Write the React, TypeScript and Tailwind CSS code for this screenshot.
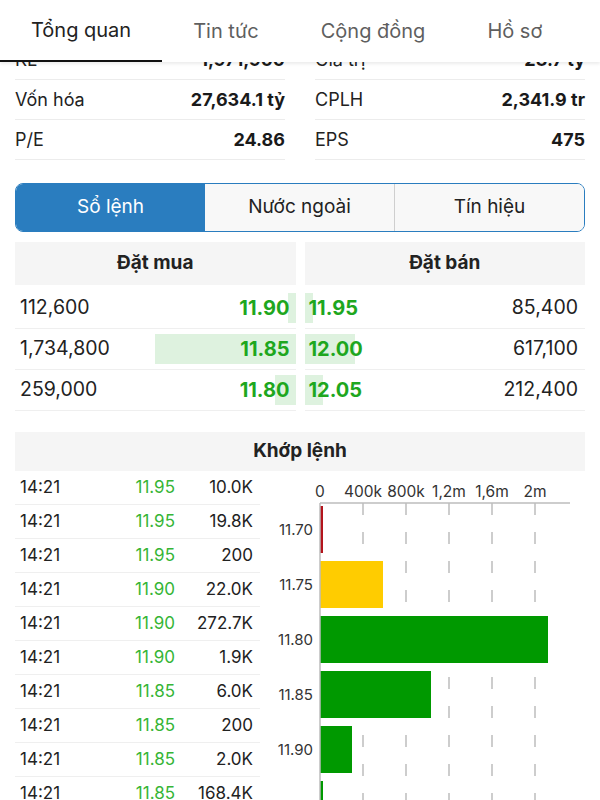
import React from "react";

const tabs = ["Tổng quan", "Tin tức", "Cộng đồng", "Hồ sơ"];

const stats = [
  [
    ["KL", "1,971,900"],
    ["Vốn hóa", "27,634.1 tỷ"],
    ["P/E", "24.86"],
  ],
  [
    ["Giá trị", "23.7 tỷ"],
    ["CPLH", "2,341.9 tr"],
    ["EPS", "475"],
  ],
];

const bids = [
  { qty: "112,600", price: "11.90", bar: 8 },
  { qty: "1,734,800", price: "11.85", bar: 141 },
  { qty: "259,000", price: "11.80", bar: 21 },
];

const asks = [
  { qty: "85,400", price: "11.95", bar: 8 },
  { qty: "617,100", price: "12.00", bar: 50 },
  { qty: "212,400", price: "12.05", bar: 18 },
];

const trades = [
  ["14:21", "11.95", "10.0K"],
  ["14:21", "11.95", "19.8K"],
  ["14:21", "11.95", "200"],
  ["14:21", "11.90", "22.0K"],
  ["14:21", "11.90", "272.7K"],
  ["14:21", "11.90", "1.9K"],
  ["14:21", "11.85", "6.0K"],
  ["14:21", "11.85", "200"],
  ["14:21", "11.85", "2.0K"],
  ["14:21", "11.85", "168.4K"],
];

const bars = [
  { label: "11.70", w: 3, color: "#b3141c" },
  { label: "11.75", w: 63, color: "#ffcc00" },
  { label: "11.80", w: 228, color: "#009900" },
  { label: "11.85", w: 111, color: "#009900" },
  { label: "11.90", w: 32, color: "#009900" },
  { label: "11.95", w: 3, color: "#009900" },
];

const ticks = ["0", "400k", "800k", "1,2m", "1,6m", "2m"];

function VolumeChart() {
  return (
    <svg width="325" height="330" viewBox="0 0 325 330" className="block">
      {ticks.map((t, i) => (
        <text
          key={t}
          x={60 + i * 43}
          y={26}
          textAnchor="middle"
          fontSize="15.5"
          fill="#333"
          fontFamily="Inter, sans-serif"
        >
          {t}
        </text>
      ))}
      <line x1="60" y1="32" x2="310" y2="32" stroke="#bdbdbd" strokeWidth="1.5" />
      {[1, 2, 3, 4, 5].map((i) => (
        <line
          key={i}
          x1={60 + i * 43}
          y1="32"
          x2={60 + i * 43}
          y2="330"
          stroke="#bdbdbd"
          strokeWidth="1.5"
          strokeDasharray="12 17"
        />
      ))}
      {bars.map((b, i) => (
        <g key={b.label}>
          <rect x="60" y={35 + i * 55} width={b.w} height="47" fill={b.color} />
          {i < 5 && (
            <text
              x="53"
              y={35 + i * 55 + 29}
              textAnchor="end"
              fontSize="15"
              fill="#333"
              fontFamily="Inter, sans-serif"
            >
              {b.label}
            </text>
          )}
        </g>
      ))}
      <line x1="60" y1="32" x2="60" y2="330" stroke="#bdbdbd" strokeWidth="1.5" />
    </svg>
  );
}

export default function App() {
  return (
    <div className="w-[600px] h-[800px] overflow-hidden bg-white font-['Inter',sans-serif] text-[#222]">
      {/* tab header */}
      <div className="relative z-10 flex h-[62px] bg-white shadow-[0_2px_3px_rgba(0,0,0,0.08)]">
        {tabs.map((t, i) => (
          <div
            key={t}
            className={
              i === 0
                ? "flex items-center px-[31px] text-[20px] text-[#222] border-b-2 border-[#111]"
                : "flex items-center px-[31px] text-[20px] text-[#5f5f5f]"
            }
          >
            {t}
          </div>
        ))}
      </div>

      <div className="-mt-[22px]">
        {/* stats */}
        <div className="grid grid-cols-2 gap-[30px] px-[15px]">
          {stats.map((col, ci) => (
            <div key={ci}>
              {col.map(([k, v]) => (
                <div
                  key={k}
                  className="flex h-[40px] items-center justify-between border-b border-[#ececec] text-[18px]"
                >
                  <span>{k}</span>
                  <span className="font-bold text-[#1a1a1a]">{v}</span>
                </div>
              ))}
            </div>
          ))}
        </div>

        {/* segmented control */}
        <div className="mx-[15px] mt-[23px] flex h-[49px] overflow-hidden rounded-[8px] border border-[#2a7dbf]">
          <div className="flex flex-1 items-center justify-center bg-[#2a7dbf] text-[19px] text-white">
            Sổ lệnh
          </div>
          <div className="flex flex-1 items-center justify-center bg-[#f8f8f8] text-[19px] text-[#222]">
            Nước ngoài
          </div>
          <div className="flex flex-1 items-center justify-center border-l border-[#cfcfcf] bg-[#f8f8f8] text-[19px] text-[#222]">
            Tín hiệu
          </div>
        </div>

        {/* order book */}
        <div className="mt-[10px] grid grid-cols-2 gap-[9px] px-[15px]">
          <div>
            <div className="flex h-[43px] items-center justify-center bg-[#f5f5f5] text-[19px] font-bold">
              Đặt mua
            </div>
            <div className="pt-[3px]">
              {bids.map((r) => (
                <div key={r.qty} className="relative flex h-[41px] items-center justify-between border-b border-[#efefef] pl-[5px] pr-[6px] text-[19.5px]">
                  <div
                    className="absolute right-0 top-[5px] h-[30px] bg-[#def2df]"
                    style={{ width: r.bar }}
                  />
                  <span className="relative">{r.qty}</span>
                  <span className="relative text-[20px] font-bold text-[#1ea71e]">{r.price}</span>
                </div>
              ))}
            </div>
          </div>
          <div>
            <div className="flex h-[43px] items-center justify-center bg-[#f5f5f5] text-[19px] font-bold">
              Đặt bán
            </div>
            <div className="pt-[3px]">
              {asks.map((r) => (
                <div key={r.qty} className="relative flex h-[41px] items-center justify-between border-b border-[#efefef] pl-[4px] pr-[7px] text-[19.5px]">
                  <div
                    className="absolute left-0 top-[5px] h-[30px] bg-[#def2df]"
                    style={{ width: r.bar }}
                  />
                  <span className="relative text-[20px] font-bold text-[#1ea71e]">{r.price}</span>
                  <span className="relative">{r.qty}</span>
                </div>
              ))}
            </div>
          </div>
        </div>

        {/* matched orders */}
        <div className="mt-[21px] px-[15px]">
          <div className="flex h-[39px] items-center justify-center bg-[#f5f5f5] text-[19px] font-bold">
            Khớp lệnh
          </div>
          <div className="flex">
            <div className="w-[245px]">
              {trades.map((t, i) => (
                <div key={i} className="flex h-[34px] items-center border-b border-[#efefef] text-[17px]">
                  <span className="w-[100px] pl-[5px]">{t[0]}</span>
                  <span className="w-[60px] text-right text-[#36b536]">{t[1]}</span>
                  <span className="w-[78px] text-right">{t[2]}</span>
                </div>
              ))}
            </div>
            <VolumeChart />
          </div>
        </div>
      </div>
    </div>
  );
}
